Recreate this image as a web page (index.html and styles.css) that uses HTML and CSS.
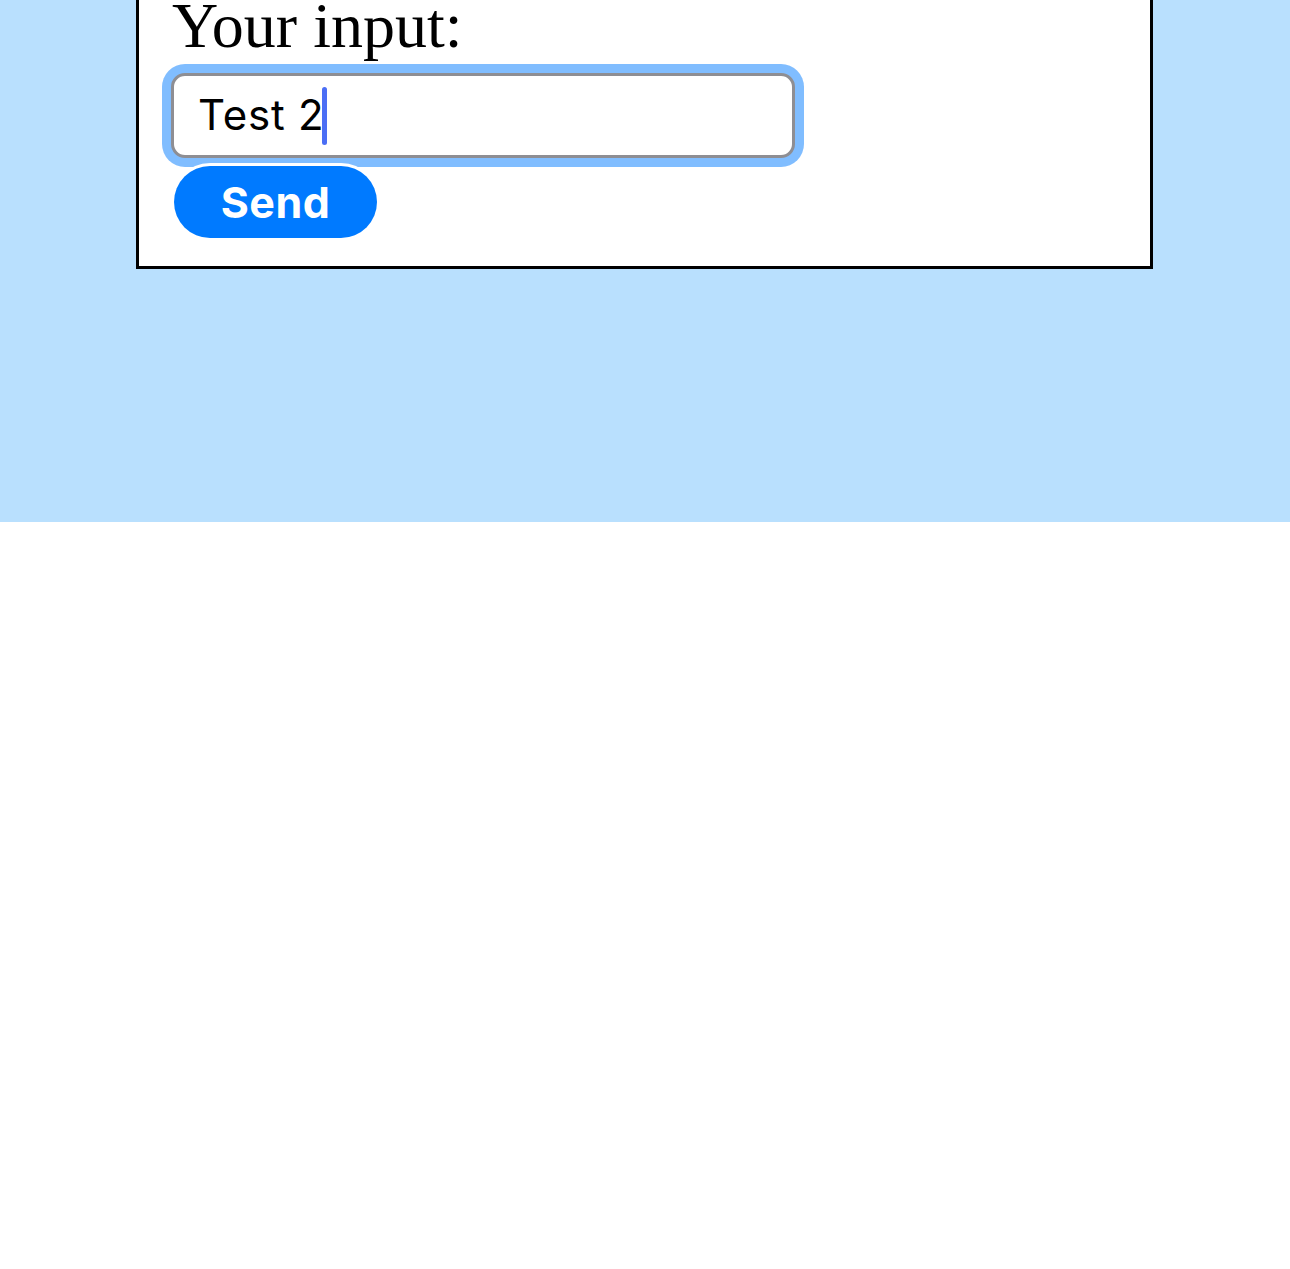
FILE: index.html
```html
<!DOCTYPE html>
<html>
<head>
<meta charset="utf-8">
<link rel="stylesheet" href="styles.css">
</head>
<body>
<div class="stage">
  <form class="card">
    <label class="label">Your input:</label>
    <div class="field"><span class="value">Test 2</span><span class="caret"></span></div>
    <button type="button" class="send">Send</button>
  </form>
</div>
</body>
</html>
```
FILE: styles.css
```css
html, body {
  margin: 0;
  padding: 0;
  background: #ffffff;
}
.stage {
  background: #b9e0fe;
  height: 522px;
  overflow: hidden;
  padding: 0 137px 0 136px;
  box-sizing: border-box;
}
.card {
  margin-top: -13px;
  border: 3px solid #000;
  background: #fff;
  display: flex;
  flex-direction: column;
  align-items: flex-start;
  padding: 0 30px 28px 32px;
  box-sizing: border-box;
  width: 1017px;
}
.label {
  font-family: "Liberation Serif", "Times New Roman", serif;
  font-size: 64px;
  line-height: 72px;
  height: 72px;
  color: #000;
  margin-left: 1px;
}
.field {
  margin-top: 11px;
  width: 624px;
  height: 85px;
  box-sizing: border-box;
  border: 3px solid #8e8e93;
  border-radius: 14px;
  box-shadow: 0 0 0 9px #80bdff;
  background: #fff;
  display: flex;
  align-items: center;
  padding-left: 24px;
  font-family: Inter, "Liberation Sans", sans-serif;
  font-size: 42px;
  letter-spacing: 0.8px;
  color: #000;
}
.value {
  line-height: 1;
  margin-top: -2px;
}
.caret {
  display: inline-block;
  flex: none;
  width: 5px;
  height: 58px;
  background: #4b6ef5;
  border-radius: 3px;
  margin-left: -2px;
}
.send {
  margin-top: 8px;
  margin-left: 3px;
  width: 203px;
  height: 72px;
  border: none;
  border-radius: 36px;
  background: #007aff;
  color: #fff;
  box-shadow: 0 0 0 3px #fff;
  font-family: Inter, "Liberation Sans", sans-serif;
  font-weight: 700;
  font-size: 43px;
  letter-spacing: 0.5px;
  padding: 0;
  cursor: pointer;
}
```
